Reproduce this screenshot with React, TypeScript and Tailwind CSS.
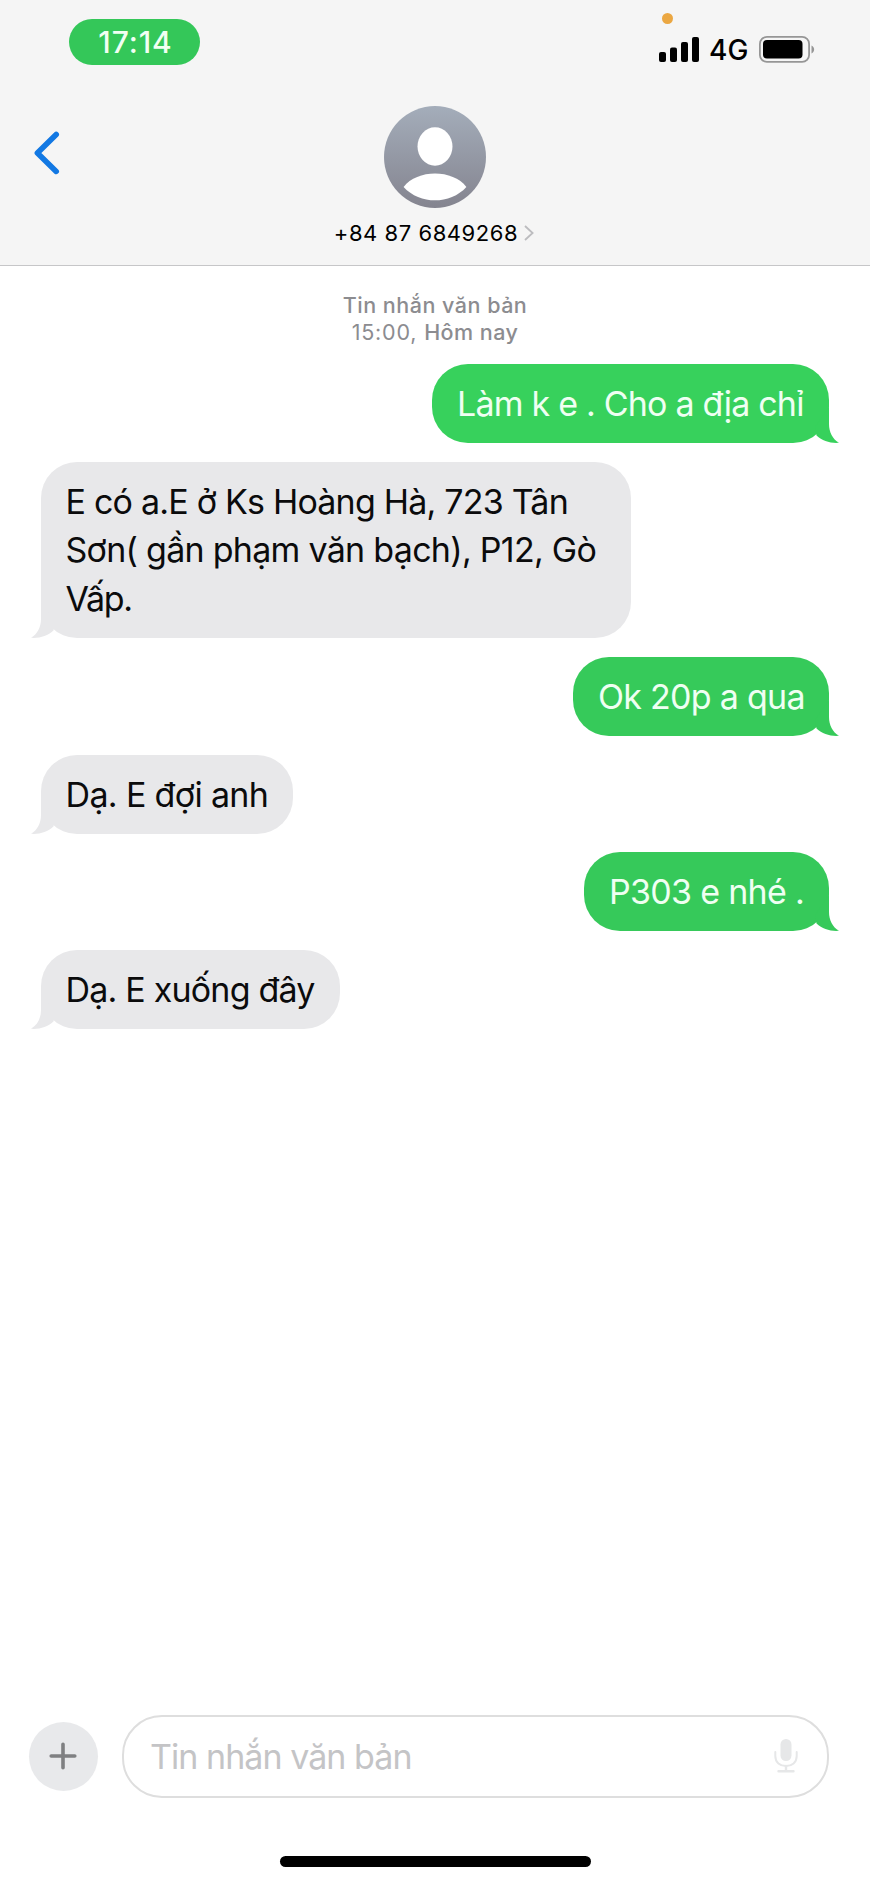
type Message = {
  id: number;
  lines: string[];
  sent?: boolean;
  size: string;
  color: string;
  tracking: string[];
};

const messages: Message[] = [
  { id: 1, sent: true, lines: ["Làm k e . Cho a địa chỉ"], size: "w-[397px] h-[79px]", color: "text-[#37d15c]", tracking: ["tracking-[-0.79px]"] },
  {
    id: 2,
    lines: ["E có a.E ở Ks Hoàng Hà, 723 Tân", "Sơn( gần phạm văn bạch), P12, Gò", "Vấp."],
    size: "w-[590px] h-[176.5px]",
    color: "text-[#e8e8ea]",
    tracking: ["tracking-[-0.79px]", "tracking-[-0.72px]", "tracking-[-1.3px]"],
  },
  { id: 3, sent: true, lines: ["Ok 20p a qua"], size: "w-[256px] h-[79px]", color: "text-[#36ca5a]", tracking: ["tracking-[-0.72px]"] },
  { id: 4, lines: ["Dạ. E đợi anh"], size: "w-[252px] h-[79px]", color: "text-[#e8e8ea]", tracking: ["tracking-[-0.65px]"] },
  { id: 5, sent: true, lines: ["P303 e nhé ."], size: "w-[245px] h-[79px]", color: "text-[#36c95a]", tracking: ["tracking-[-0.7px]"] },
  { id: 6, lines: ["Dạ. E xuống đây"], size: "w-[299px] h-[79px]", color: "text-[#e8e8ea]", tracking: ["tracking-[-0.8px]"] },
];

const StatusBar = () => (
  <div className="flex h-[92px] items-start justify-between pl-[69px] pr-[55px]">
    <div className="mt-[18.5px] flex h-[46.5px] w-[131px] items-center justify-center rounded-full bg-[#34c759] pl-[2px] text-[30px] font-medium leading-none tracking-[0.9px] text-[#f1fff3]">
      17:14
    </div>

    <div className="flex flex-col">
      <span className="ml-[3px] mt-[13px] h-[10.5px] w-[10.5px] rounded-full bg-[#eba742]" />
      <div className="mt-[8.5px] flex h-[34px] items-center">
        {/* Signal */}
        <svg className="h-[26px] w-[40px]" viewBox="0 0 40 26">
          <rect x="0" y="16" width="7" height="10" rx="2" />
          <rect x="11" y="11.5" width="7" height="14.5" rx="2" />
          <rect x="22" y="6" width="7" height="20" rx="2" />
          <rect x="33" y="1" width="7" height="25" rx="2" />
        </svg>
        <span className="ml-[10px] w-[50px] pt-[1px] text-[28px] font-medium leading-none">4G</span>
        {/* Battery */}
        <svg className="h-[27px] w-[56px]" viewBox="0 0 56 27">
          <rect x="0.9" y="0.9" width="49.2" height="25" rx="7" fill="none" stroke="#969696" strokeWidth="1.8" />
          <rect x="4" y="4" width="39.5" height="18.5" rx="4" />
          <path d="M52.5 9.5 C56 11 56 16 52.5 17.5 Z" fill="#969696" />
        </svg>
      </div>
    </div>
  </div>
);

const Header = () => (
  <header className="h-[266px] border-b border-[#c6c6c8] bg-[#f5f5f5]">
    <StatusBar />
    <div className="grid grid-cols-[1fr_auto_1fr]">
      <button className="ml-[33px] mt-[39px] h-[44px] w-[28px]">
        <svg className="h-[44px] w-[28px]" viewBox="0 0 28 44" fill="none" stroke="#1278e3" strokeWidth="5.6" strokeLinecap="round" strokeLinejoin="round">
          <path d="M23.2 3.4 L4.4 22 L23.2 40.4" />
        </svg>
      </button>

      <div className="mt-[13.5px] flex flex-col items-center">
        <svg className="h-[102px] w-[102px]" viewBox="0 0 102 102">
          <defs>
            <linearGradient id="avatar" x1="0" y1="0" x2="0" y2="1">
              <stop offset="0" stopColor="#a4adba" />
              <stop offset="1" stopColor="#84848f" />
            </linearGradient>
          </defs>
          <circle cx="51" cy="51" r="51" fill="url(#avatar)" />
          <ellipse cx="51" cy="40.5" rx="17.5" ry="19.2" fill="#fff" />
          <path d="M19.6 81 C33 63 69 63 82.4 81 C66 98.8 36 98.8 19.6 81 Z" fill="#fff" />
        </svg>
        <div className="mt-[12px] flex items-center gap-[6px] pr-[2px]">
          <span className="text-[22px] leading-[27px] tracking-[0.55px]">+84 87 6849268</span>
          <svg className="h-[16px] w-[10px]" viewBox="0 0 10 16" fill="none" stroke="#bcbcbf" strokeWidth="1.8">
            <path d="M1 1 L8.6 8 L1 15" />
          </svg>
        </div>
      </div>
    </div>
  </header>
);

const Bubble = ({ message }: { message: Message }) => (
  <div
    className={`relative rounded-[36px] bg-current pt-[16px] ${message.size} ${message.color} ${
      message.sent ? "self-end pl-[25px]" : "self-start pl-[24.5px]"
    }`}
  >
    {message.lines.map((line, i) => (
      <p
        key={line}
        className={`whitespace-nowrap text-[34px] leading-[48.8px] ${message.tracking[i]} ${message.sent ? "text-[#effff2]" : "text-[#0b0b0c]"}`}
      >
        {line}
      </p>
    ))}
    <svg
      className={`absolute bottom-0 h-[36px] w-[24px] ${message.sent ? "right-[-10px]" : "left-[-10px] -scale-x-100"}`}
      viewBox="0 0 24 36"
      fill="currentColor"
    >
      <path d="M14 0 V17 C14 25 17.5 32 24 35.8 C15 36.4 7.5 34 1.5 28.5 L0 20 Z" />
    </svg>
  </div>
);

const Composer = () => (
  <footer className="pl-[29px] pr-[41px]">
    <div className="flex items-center">
      <button className="flex h-[69px] w-[69px] items-center justify-center rounded-full bg-[#e8e9eb] pr-[1px]">
        <svg className="h-[28px] w-[28px]" viewBox="0 0 28 28" stroke="#7f8082" strokeWidth="3.6" strokeLinecap="round">
          <path d="M14 2.2 V25.8 M2.2 14 H25.8" />
        </svg>
      </button>
      <div className="ml-[24px] flex h-[83px] flex-1 items-center justify-between rounded-[40px] border-2 border-[#dedede] pl-[26px] pr-[29px]">
        <span className="pt-[1px] text-[34px] leading-none tracking-[-0.95px] text-[#c4c4c6]">Tin nhắn văn bản</span>
        {/* Dictation mic */}
        <svg className="h-[34px] w-[24px]" viewBox="0 0 24 34" fill="none" stroke="#e6e7e8" strokeWidth="2">
          <rect x="6.5" y="0" width="11" height="22" rx="5.5" fill="#e6e7e8" stroke="none" />
          <path d="M1.3 13 V17 C1.3 23.5 6 27 12 27 C18 27 22.7 23.5 22.7 17 V13" strokeLinecap="round" />
          <path d="M12 27 V32 M4.5 32.3 H19.5" strokeWidth="2.4" strokeLinecap="round" />
        </svg>
      </div>
    </div>
    <div className="mb-[16.5px] ml-[251px] mt-[58.5px] h-[10.5px] w-[311px] rounded-full bg-black" />
  </footer>
);

export default function App() {
  return (
    <div className="flex h-[1883px] w-[870px] flex-col bg-white font-['Inter','Noto_Sans',sans-serif] text-black">
      <Header />
      <div className="mt-[26px] flex flex-col items-center text-[21.5px] leading-[26.5px] text-[#8c8c90]">
        <p className="font-medium tracking-[0.5px]">Tin nhắn văn bản</p>
        <p>
          <span className="tracking-[0.8px]">15:00, </span>
          <span className="font-medium tracking-[0.45px]">Hôm nay</span>
        </p>
      </div>
      <main className="mt-[19px] flex flex-1 flex-col gap-[18.7px] px-[41px]">
        {messages.map((message) => (
          <Bubble key={message.id} message={message} />
        ))}
      </main>
      <Composer />
    </div>
  );
}
